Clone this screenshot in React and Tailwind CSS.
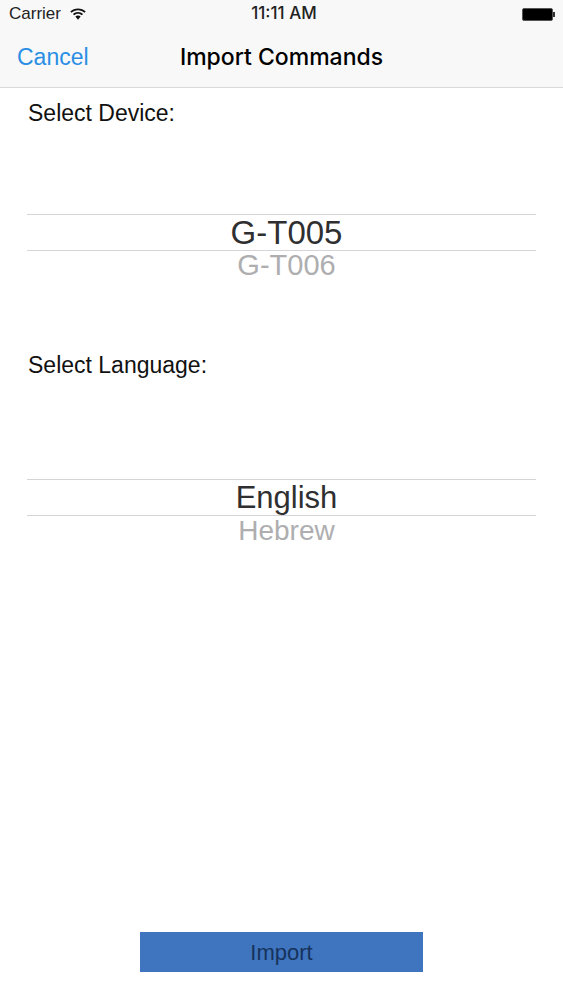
function Wifi() {
  return (
    <svg width="16" height="13" viewBox="0 0 17 13" fill="#111">
      <path d="M8.5 0C5.3 0 2.4 1.2 0.3 3.3L1.6 4.7C3.4 2.9 5.8 1.9 8.5 1.9s5.1 1 6.9 2.8l1.3-1.4C14.6 1.2 11.7 0 8.5 0z" />
      <path d="M8.5 3.8c-2.1 0-4 .8-5.4 2.2l1.3 1.4C5.5 6.3 6.9 5.7 8.5 5.7s3 .6 4.1 1.7L13.9 6C12.5 4.6 10.6 3.8 8.5 3.8z" />
      <path d="M8.5 7.5c-1.1 0-2.1.4-2.8 1.2l2.8 3.4 2.8-3.4C10.6 7.9 9.6 7.5 8.5 7.5z" />
    </svg>
  );
}

function Picker({ selected, next, selectedSize, nextSize }) {
  return (
    <div className="flex flex-col items-center">
      <div className={`w-[509px] h-[37px] pl-[10px] border-y border-[#d5d5d8] flex items-center justify-center leading-none text-[#2f2f31] ${selectedSize}`}>
        {selected}
      </div>
      <div className={`h-[29px] pl-[10px] flex items-center justify-center leading-none text-[#aeaeb0] ${nextSize}`}>
        {next}
      </div>
    </div>
  );
}

export default function App() {
  return (
    <div className="w-[563px] h-[1000px] bg-white flex flex-col font-['Liberation_Sans',sans-serif] text-black">
      <div className="h-[88px] bg-[#f8f8f9] border-b border-[#d9d9db] flex flex-col">
        <div className="h-[28px] relative flex items-center justify-between pl-[9px] pr-[8px]">
          <div className="flex items-center gap-[9px] text-[17px] text-[#222]">
            <span>Carrier</span>
            <Wifi />
          </div>
          <div className="absolute left-0 right-0 text-center text-[17px] font-medium font-['Inter',sans-serif] text-[#222] translate-x-[2.5px]">
            11:11 AM
          </div>
          <div className="flex items-center">
            <div className="w-[31px] h-[13px] bg-black rounded-[2px] border border-[#555]" />
            <div className="w-[2px] h-[5px] bg-[#333]" />
          </div>
        </div>
        <div className="flex-1 relative flex items-center pl-[17px] pb-[1px]">
          <span className="text-[23px] text-[#2a8fe4]">Cancel</span>
          <div className="absolute left-0 right-0 text-center text-[23px] font-medium font-['Inter',sans-serif]">
            Import Commands
          </div>
        </div>
      </div>

      <div className="pl-[28px] mt-[12px] text-[23px] leading-[27px] text-[#111]">Select Device:</div>
      <div className="mt-[87px]">
        <Picker selected="G-T005" next="G-T006" selectedSize="text-[33px]" nextSize="text-[29px]" />
      </div>

      <div className="pl-[28px] mt-[72px] text-[23px] leading-[27px] text-[#111]">Select Language:</div>
      <div className="mt-[100px]">
        <Picker selected="English" next="Hebrew" selectedSize="text-[31px]" nextSize="text-[28px]" />
      </div>

      <div className="mt-auto mb-[28px] ml-[140px] w-[283px] h-[40px] bg-[#3f75bf] flex items-center justify-center text-[22px] text-[#16335c]">
        Import
      </div>
    </div>
  );
}
